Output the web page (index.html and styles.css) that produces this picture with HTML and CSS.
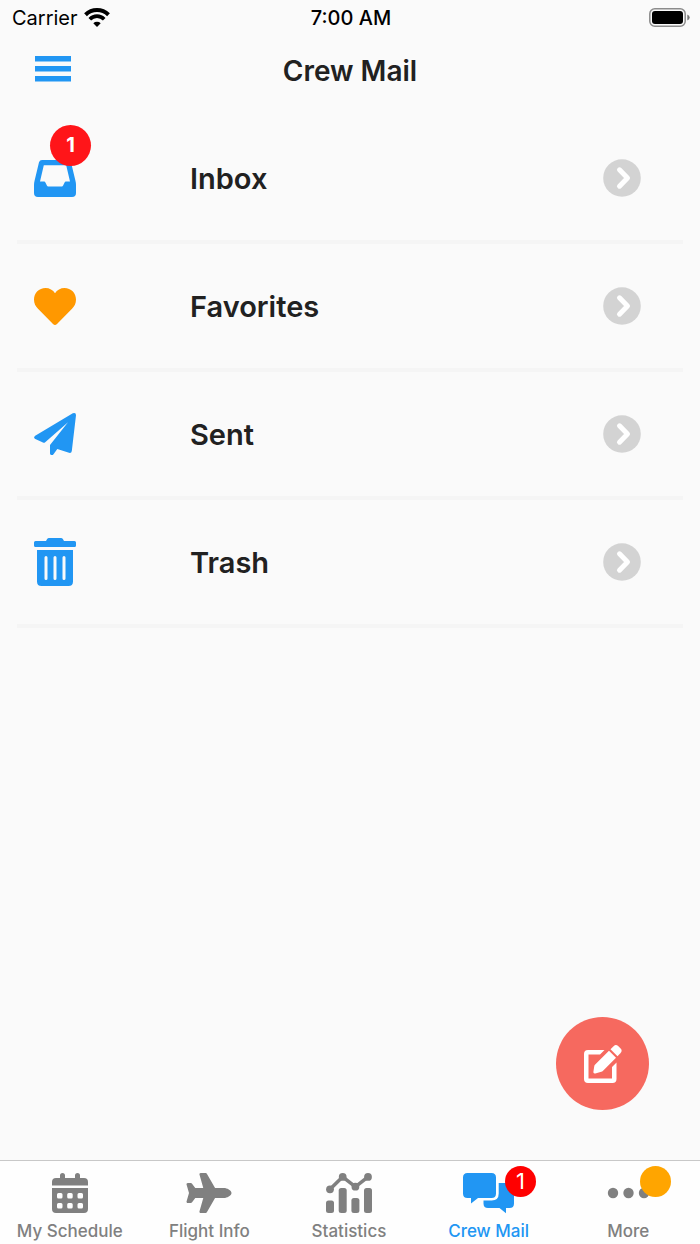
FILE: index.html
```
<!DOCTYPE html>
<html lang="en">
<head>
	<meta charset="UTF-8" />
	<meta name="viewport" content="width=device-width, initial-scale=1" />

	<title>Crew Mail</title>

	<link rel="stylesheet" href="styles.css">
</head>
<body>
	<div class="status_bar">
		<div class="carrier">
			<span>Carrier</span>
			<svg width="26" height="20" viewBox="0 0 26 20">
				<path d="M1.500 6.700a16.500 16.500 0 0 1 23 0" fill="none" stroke="#000" stroke-width="4"/>
				<path d="M5.800 11.200a10 10 0 0 1 14.400 0" fill="none" stroke="#000" stroke-width="3.600"/>
				<path d="M9.300 15.200a5.400 5.400 0 0 1 7.400 0L13 19z" fill="#000"/>
			</svg>
		</div>
		<div class="time">7:00 AM</div>
		<div class="battery">
			<svg width="41" height="20" viewBox="0 0 41 20">
				<rect x="0.800" y="0.800" width="35.400" height="17.400" rx="5" fill="none" stroke="#8c8c8c" stroke-width="1.500"/>
				<rect x="3" y="3" width="31" height="13" rx="3" fill="#000"/>
				<path d="M38.300 6.500q2.400 1 2.400 3t-2.400 3z" fill="#777"/>
			</svg>
		</div>
	</div>

	<header class="header">
		<button class="menu" type="button" aria-label="Menu">
			<svg width="36" height="26" viewBox="0 0 36 26">
				<path d="M0 0h36v5.500H0zM0 10h36v5.500H0zM0 20h36v5.500H0z"/>
			</svg>
		</button>
		<h1 class="page_title">Crew Mail</h1>
	</header>

	<main class="container">
		<ul class="folders">
			<li>
				<a class="folder" href="#inbox">
					<span class="folder_icon">
						<svg width="42" height="37" viewBox="0 0 42 37">
							<path fill-rule="evenodd" d="M8 0h26q2.300 0 3 2.300L41.500 21q.5 2 .5 4v8q0 4-4 4H4q-4 0-4-4v-8q0-2 .5-4L5 2.300Q5.700 0 8 0zM9.800 5.200L6 21.500h4.200q.8 0 1.200.9l1.500 3.200q.4.900 1.300.9h13.600q.9 0 1.300-.9l1.500-3.200q.4-.9 1.200-.9H36L32.200 5.200z"/>
						</svg>
						<span class="badge">1</span>
					</span>
					<span class="folder_name">Inbox</span>
					<svg class="arrow" width="38" height="38" viewBox="0 0 38 38">
						<circle cx="19" cy="19" r="18.800"/>
						<path d="M16.500 10.800l8 8.200-8 8.200"/>
					</svg>
				</a>
			</li>
			<li>
				<a class="folder" href="#favorites">
					<span class="folder_icon favorite">
						<svg width="42" height="37" viewBox="0 0 42 37">
							<path d="M0 11.500C0 5 5 0 11.500 0 15.500 0 19 2 21 5.200 23 2 26.500 0 30.500 0 37 0 42 5 42 11.500c0 4-1.500 6.800-4 9.300L23 36q-2 2-4 0L4 20.800C1.500 18.300 0 15.500 0 11.500z"/>
						</svg>
					</span>
					<span class="folder_name">Favorites</span>
					<svg class="arrow" width="38" height="38" viewBox="0 0 38 38">
						<circle cx="19" cy="19" r="18.800"/>
						<path d="M16.500 10.800l8 8.200-8 8.200"/>
					</svg>
				</a>
			</li>
			<li>
				<a class="folder" href="#sent">
					<span class="folder_icon">
						<svg width="42" height="42" viewBox="0 0 42 42">
							<path d="M38.800.3Q42-1 42 2.300L37.800 38q-.4 2.500-2.800 1.800L23.300 36l-3.800 5.200Q18.700 42.300 17.300 42 16 41.800 16 40.500V32L34 9.300 10.900 29.500q-.6.500-1.400.2L1.300 25.900Q-1.100 24.500 1.200 22.700z"/>
						</svg>
					</span>
					<span class="folder_name">Sent</span>
					<svg class="arrow" width="38" height="38" viewBox="0 0 38 38">
						<circle cx="19" cy="19" r="18.800"/>
						<path d="M16.500 10.800l8 8.200-8 8.200"/>
					</svg>
				</a>
			</li>
			<li>
				<a class="folder" href="#trash">
					<span class="folder_icon">
						<svg width="42" height="48" viewBox="0 0 42 48">
							<path d="M1.500 3H12l1-1.700Q13.700 0 15 0h12q1.300 0 2 1.300L30 3h10.500Q42 3 42 4.500v3Q42 9 40.500 9h-39Q0 9 0 7.500v-3Q0 3 1.500 3z"/>
							<path fill-rule="evenodd" d="M3 12h36v31.500q0 4.500-4.500 4.500h-27Q3 48 3 43.500zM10.500 19.500v21a1.500 1.500 0 0 0 3 0v-21a1.500 1.500 0 0 0-3 0zM19.500 19.500v21a1.500 1.500 0 0 0 3 0v-21a1.500 1.500 0 0 0-3 0zM28.500 19.500v21a1.500 1.500 0 0 0 3 0v-21a1.500 1.500 0 0 0-3 0z"/>
						</svg>
					</span>
					<span class="folder_name">Trash</span>
					<svg class="arrow" width="38" height="38" viewBox="0 0 38 38">
						<circle cx="19" cy="19" r="18.800"/>
						<path d="M16.500 10.800l8 8.200-8 8.200"/>
					</svg>
				</a>
			</li>
		</ul>
	</main>

	<button class="compose" type="button" aria-label="Compose">
		<svg width="38" height="38" viewBox="0 0 38 38">
			<path d="M20.500 5H4Q0 5 0 9v25q0 4 4 4h24.500q4 0 4-4V17.500L28 22v11.500H4.500v-24H16z"/>
			<path d="M25 5.700l7 7L18.800 26q-.6.600-1.500.8l-6 1.700q-2.200.5-1.900-1.700l.9-5.800q.1-.8.900-1.600z"/>
			<path d="M26.500 4.300L29.600 1.200q2.200-2.100 4.500-.1l2.500 2.500q2.100 2.200 0 4.500L33.500 11.300z"/>
		</svg>
	</button>

	<nav class="tabs">
		<a class="tab" href="#schedule">
			<span class="tab_icon">
				<svg width="36" height="40" viewBox="0 0 36 40">
					<path d="M0 12.500V9q0-4 4-4h4V2.500a2.500 2.500 0 0 1 5 0V5h10V2.500a2.500 2.500 0 0 1 5 0V5h4q4 0 4 4v3.500z"/>
					<path fill-rule="evenodd" d="M0 15h36v21q0 4-4 4H4q-4 0-4-4zM6.500 20Q5 20 5 21.500v2.500Q5 25.500 6.500 25.500h2.500q1.500 0 1.500-1.500v-2.500Q10.500 20 9 20zM16.700 20q-1.500 0-1.500 1.500v2.500q0 1.500 1.500 1.500h2.500q1.500 0 1.500-1.500v-2.500q0-1.500-1.500-1.500zM27 20q-1.500 0-1.500 1.500v2.500q0 1.500 1.500 1.500h2.500q1.500 0 1.500-1.500v-2.500q0-1.500-1.500-1.500zM6.500 30Q5 30 5 31.500v2.500Q5 35.500 6.500 35.500h2.500q1.500 0 1.500-1.500v-2.500Q10.500 30 9 30zM16.700 30q-1.500 0-1.500 1.500v2.500q0 1.500 1.500 1.500h2.500q1.500 0 1.500-1.500v-2.500q0-1.500-1.500-1.500zM27 30q-1.500 0-1.500 1.500v2.500q0 1.500 1.500 1.500h2.500q1.500 0 1.500-1.500v-2.500q0-1.500-1.500-1.500z"/>
				</svg>
			</span>
			<span class="tab_name">My Schedule</span>
		</a>
		<a class="tab" href="#flight">
			<span class="tab_icon">
				<svg width="46" height="40" viewBox="0 0 576 512">
					<path d="M480 192H365.710L260.610 8.060A16.014 16.014 0 0 0 246.710 0h-65.500c-10.630 0-18.300 10.170-15.380 20.390L214.860 192H112l-43.200-57.600c-3.020-4.030-7.770-6.400-12.800-6.400H16.010C5.600 128-2.040 137.780.49 147.880L32 256 .49 364.120C-2.040 374.220 5.600 384 16.010 384H56c5.040 0 9.780-2.370 12.800-6.400L112 320h102.860l-49.030 171.600c-2.920 10.220 4.750 20.400 15.380 20.400h65.500c5.740 0 11.040-3.080 13.890-8.060L365.710 320H480c35.350 0 96-28.650 96-64s-60.650-64-96-64z"/>
				</svg>
			</span>
			<span class="tab_name">Flight Info</span>
		</a>
		<a class="tab" href="#statistics">
			<span class="tab_icon">
				<svg width="46" height="40" viewBox="0 0 46 40">
					<rect x="0" y="27.500" width="8" height="12.500" rx="2.500"/>
					<rect x="12.700" y="15" width="8" height="25" rx="2.500"/>
					<rect x="25.400" y="25" width="8" height="15" rx="2.500"/>
					<rect x="38" y="15" width="8" height="25" rx="2.500"/>
					<path d="M4 16.300L16.700 3.800l12.700 10L42 3.800" fill="none" stroke="#808080" stroke-width="3.600"/>
					<circle cx="4" cy="16.300" r="3.900"/>
					<circle cx="16.700" cy="3.900" r="3.900"/>
					<circle cx="29.400" cy="13.700" r="3.900"/>
					<circle cx="42" cy="3.900" r="3.900"/>
				</svg>
			</span>
			<span class="tab_name">Statistics</span>
		</a>
		<a class="tab active" href="#mail">
			<span class="tab_icon">
				<svg width="51" height="40" viewBox="0 0 51 40">
					<path d="M4.500 0h24q4.500 0 4.500 4.500v16q0 4.500-4.500 4.500H15l-7 5.500V25H4.500Q0 25 0 20.500v-16Q0 0 4.500 0z"/>
					<path d="M35.700 10h10.800q4.500 0 4.500 4.500v16q0 4.500-4.500 4.500H43v5.300L36.500 35H25q-4.500 0-4.500-4.500V27.500H28.700q7 0 7-7z"/>
				</svg>
				<span class="tab_badge">1</span>
			</span>
			<span class="tab_name">Crew Mail</span>
		</a>
		<a class="tab" href="#more">
			<span class="tab_icon">
				<svg width="41" height="40" viewBox="0 0 41 40">
					<circle cx="5" cy="20" r="5.200"/>
					<circle cx="20.500" cy="20" r="5.200"/>
					<circle cx="36" cy="20" r="5.200"/>
				</svg>
				<span class="tab_badge notice"></span>
			</span>
			<span class="tab_name">More</span>
		</a>
	</nav>
</body>
</html>
```
FILE: styles.css
```
body{
	margin: 0;
	min-height: 100vh;
	display: flex;
	flex-direction: column;
	background-color: #fafafa;
	color: #212121;
	font-family: Inter, sans-serif;
}

svg{
	display: block;
	flex: none;
	overflow: visible;
}

button{
	border: 0;
	padding: 0;
	cursor: pointer;
}

a{
	color: inherit;
	text-decoration: none;
}

.status_bar{
	display: grid;
	grid-template-columns: 1fr auto 1fr;
	align-items: center;
	height: 36px;
	padding: 0 10px 0 12px;
	color: #000;
	font-size: 20px;
}

.carrier{
	display: flex;
	align-items: center;
	gap: 6px;
}

.time{
	font-weight: 500;
}

.battery{
	justify-self: end;
}

.header{
	display: grid;
	grid-template-columns: 1fr auto 1fr;
	align-items: center;
	height: 70px;
	padding: 0 35px;
}

.menu{
	justify-self: start;
	padding-bottom: 5px;
	background: none;
	fill: #2196f3;
}

.page_title{
	margin: 0;
	font-size: 28px;
	font-weight: 600;
}

.container{
	flex: 1;
	padding: 10px 17px;
}

.folders{
	list-style: none;
	margin: 0;
	padding: 0;
}

.folder{
	display: flex;
	align-items: center;
	height: 124px;
	padding: 0 42px 0 17px;
	border-bottom: 4px solid #f5f5f5;
}

.folder_icon{
	position: relative;
	width: 42px;
	fill: #2196f3;
}

.favorite{
	fill: #ff9800;
}

.folder_name{
	flex: 1;
	margin-left: 114px;
	font-size: 29px;
	font-weight: 600;
}

.arrow circle{
	fill: #d3d3d3;
}

.arrow path{
	fill: none;
	stroke: #fff;
	stroke-width: 5;
	stroke-linecap: round;
	stroke-linejoin: round;
}

.badge{
	position: absolute;
	top: -35px;
	right: -15px;
	width: 41px;
	line-height: 41px;
	border-radius: 50%;
	background-color: #ff1519;
	color: #fff;
	font-size: 20px;
	font-weight: 700;
	text-align: center;
}

.compose{
	position: fixed;
	right: 51px;
	bottom: 134px;
	display: flex;
	align-items: center;
	justify-content: center;
	width: 93px;
	height: 93px;
	border-radius: 50%;
	background-color: #f6695f;
	fill: #fff;
}

.tabs{
	display: flex;
	height: 83px;
	padding-right: 2px;
	border-top: 1px solid #c8c8c8;
	background-color: #fefefe;
	color: #808080;
	fill: #808080;
}

.tab{
	flex: 1;
	display: flex;
	flex-direction: column;
	align-items: center;
	gap: 8px;
	padding-top: 12px;
}

.active{
	color: #2196f3;
	fill: #2196f3;
}

.tab_icon{
	position: relative;
}

.tab_name{
	font-size: 17px;
	font-weight: 500;
	line-height: 20px;
}

.tab_badge{
	position: absolute;
	top: -7px;
	right: -22px;
	width: 31px;
	height: 31px;
	line-height: 31px;
	border-radius: 50%;
	background-color: #f00;
	color: #fff;
	font-size: 22px;
	text-align: center;
}

.notice{
	background-color: #ffa500;
}
```
